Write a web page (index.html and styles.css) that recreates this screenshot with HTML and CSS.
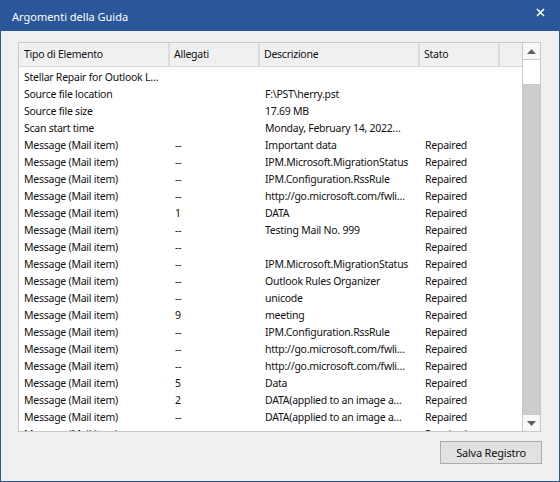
FILE: index.html
```html
<!DOCTYPE html>
<html>
<head>
<meta charset="utf-8">
<link rel="stylesheet" href="styles.css">
</head>
<body>
<div class="window">
  <div class="titlebar">
    <span class="title">Argomenti della Guida</span>
    <svg class="close" width="9" height="9" viewBox="0 0 9 9"><path d="M1 1 L8 8 M8 1 L1 8" stroke="#fff" stroke-width="1.6" fill="none"/></svg>
  </div>
  <div class="content">
    <div class="listbox">
      <div class="table">
        <div class="row header">
          <div class="cell">Tipo di Elemento</div>
          <div class="cell">Allegati</div>
          <div class="cell">Descrizione</div>
          <div class="cell">Stato</div>
          <div class="cell"></div>
        </div>
        <div class="rows">
          <div class="row"><div class="cell">Stellar Repair for Outlook L…</div><div class="cell"></div><div class="cell"></div><div class="cell"></div></div>
          <div class="row"><div class="cell">Source file location</div><div class="cell"></div><div class="cell">F:\PST\herry.pst</div><div class="cell"></div></div>
          <div class="row"><div class="cell">Source file size</div><div class="cell"></div><div class="cell">17.69 MB</div><div class="cell"></div></div>
          <div class="row"><div class="cell">Scan start time</div><div class="cell"></div><div class="cell">Monday, February 14, 2022…</div><div class="cell"></div></div>
          <div class="row"><div class="cell">Message (Mail item)</div><div class="cell">--</div><div class="cell">Important data</div><div class="cell">Repaired</div></div>
          <div class="row"><div class="cell">Message (Mail item)</div><div class="cell">--</div><div class="cell">IPM.Microsoft.MigrationStatus</div><div class="cell">Repaired</div></div>
          <div class="row"><div class="cell">Message (Mail item)</div><div class="cell">--</div><div class="cell">IPM.Configuration.RssRule</div><div class="cell">Repaired</div></div>
          <div class="row"><div class="cell">Message (Mail item)</div><div class="cell">--</div><div class="cell">http://go.microsoft.com/fwli…</div><div class="cell">Repaired</div></div>
          <div class="row"><div class="cell">Message (Mail item)</div><div class="cell">1</div><div class="cell">DATA</div><div class="cell">Repaired</div></div>
          <div class="row"><div class="cell">Message (Mail item)</div><div class="cell">--</div><div class="cell">Testing Mail No. 999</div><div class="cell">Repaired</div></div>
          <div class="row"><div class="cell">Message (Mail item)</div><div class="cell">--</div><div class="cell"></div><div class="cell">Repaired</div></div>
          <div class="row"><div class="cell">Message (Mail item)</div><div class="cell">--</div><div class="cell">IPM.Microsoft.MigrationStatus</div><div class="cell">Repaired</div></div>
          <div class="row"><div class="cell">Message (Mail item)</div><div class="cell">--</div><div class="cell">Outlook Rules Organizer</div><div class="cell">Repaired</div></div>
          <div class="row"><div class="cell">Message (Mail item)</div><div class="cell">--</div><div class="cell">unicode</div><div class="cell">Repaired</div></div>
          <div class="row"><div class="cell">Message (Mail item)</div><div class="cell">9</div><div class="cell">meeting</div><div class="cell">Repaired</div></div>
          <div class="row"><div class="cell">Message (Mail item)</div><div class="cell">--</div><div class="cell">IPM.Configuration.RssRule</div><div class="cell">Repaired</div></div>
          <div class="row"><div class="cell">Message (Mail item)</div><div class="cell">--</div><div class="cell">http://go.microsoft.com/fwli…</div><div class="cell">Repaired</div></div>
          <div class="row"><div class="cell">Message (Mail item)</div><div class="cell">--</div><div class="cell">http://go.microsoft.com/fwli…</div><div class="cell">Repaired</div></div>
          <div class="row"><div class="cell">Message (Mail item)</div><div class="cell">5</div><div class="cell">Data</div><div class="cell">Repaired</div></div>
          <div class="row"><div class="cell">Message (Mail item)</div><div class="cell">2</div><div class="cell">DATA(applied to an image a…</div><div class="cell">Repaired</div></div>
          <div class="row"><div class="cell">Message (Mail item)</div><div class="cell">--</div><div class="cell">DATA(applied to an image a…</div><div class="cell">Repaired</div></div>
          <div class="row"><div class="cell">Message (Mail item)</div><div class="cell">--</div><div class="cell"></div><div class="cell">Repaired</div></div>
        </div>
      </div>
      <div class="scrollbar">
        <div class="sb-btn"><svg width="9" height="5" viewBox="0 0 9 5"><path d="M0 5 L4.5 0 L9 5 Z" fill="#606060"/></svg></div>
        <div class="sb-thumb"></div>
        <div class="sb-track"></div>
        <div class="sb-btn"><svg width="9" height="5" viewBox="0 0 9 5"><path d="M0 0 L4.5 5 L9 0 Z" fill="#606060"/></svg></div>
      </div>
    </div>
    <div class="actions">
      <button class="btn">Salva Registro</button>
    </div>
  </div>
</div>
</body>
</html>
```
FILE: styles.css
```css
html, body {
  margin: 0;
  padding: 0;
}
body {
  width: 560px;
  height: 482px;
  overflow: hidden;
  font-family: "Noto Sans", "Open Sans", sans-serif;
  font-size: 10.5px;
  letter-spacing: -0.25px;
  color: #111;
}
.window {
  box-sizing: border-box;
  width: 560px;
  height: 482px;
  border: 1px solid #2b579a;
  border-top: none;
  background: #f0f0f0;
  display: flex;
  flex-direction: column;
}
.titlebar {
  height: 31px;
  flex: none;
  background: #2b579a;
  display: flex;
  align-items: center;
  justify-content: space-between;
  padding: 0 14px 0 11px;
  color: #fff;
}
.title {
  font-size: 11px;
  letter-spacing: 0;
  position: relative;
  top: 1px;
}
.close {
  position: relative;
  top: -3px;
}
.content {
  flex: 1;
  display: flex;
  flex-direction: column;
  padding: 11px 17px 0 17px;
}
.listbox {
  box-sizing: border-box;
  width: 523px;
  height: 390px;
  border: 1px solid #c9c9c9;
  background: #fff;
  display: flex;
  overflow: hidden;
}
.table {
  flex: 1;
  display: flex;
  flex-direction: column;
  overflow: hidden;
}
.row {
  display: grid;
  grid-template-columns: 151px 90px 160px 80px 1fr;
  height: 17px;
  align-items: center;
  white-space: nowrap;
}
.rows {
  padding-top: 2px;
  overflow: hidden;
  flex: 1;
}
.rows .cell {
  padding-left: 5px;
  overflow: hidden;
  line-height: 17px;
}
.header {
  height: 23px;
  background: #f0f0f0;
  border-bottom: 1px solid #d9d9d9;
  align-items: stretch;
}
.header .cell {
  border-right: 2px solid #dcdcdc;
  padding-left: 4px;
  line-height: 23px;
}
.header .cell:first-child {
  padding-left: 5px;
}
.header .cell:last-child {
  border-right: none;
}
.scrollbar {
  width: 17px;
  flex: none;
  display: flex;
  flex-direction: column;
  border-left: 1px solid #c9c9c9;
  background: #f0f0f0;
}
.sb-btn {
  height: 16px;
  flex: none;
  display: flex;
  align-items: center;
  justify-content: center;
  background: #f8f8f8;
  border-bottom: 1px solid #c9c9c9;
}
.sb-btn:last-child {
  border-bottom: none;
  border-top: 1px solid #c9c9c9;
}
.sb-thumb {
  height: 24px;
  flex: none;
  background: #fff;
  border-bottom: 1px solid #c9c9c9;
}
.sb-track {
  flex: 1;
  background: #cdcdcd;
}
.actions {
  display: flex;
  justify-content: flex-end;
  padding-top: 9px;
  width: 524px;
}
.btn {
  width: 102px;
  height: 23px;
  background: #e1e1e1;
  border: 1px solid #adadad;
  font-family: inherit;
  font-size: 11px;
  letter-spacing: -0.2px;
  color: #111;
  padding: 0;
}
```
